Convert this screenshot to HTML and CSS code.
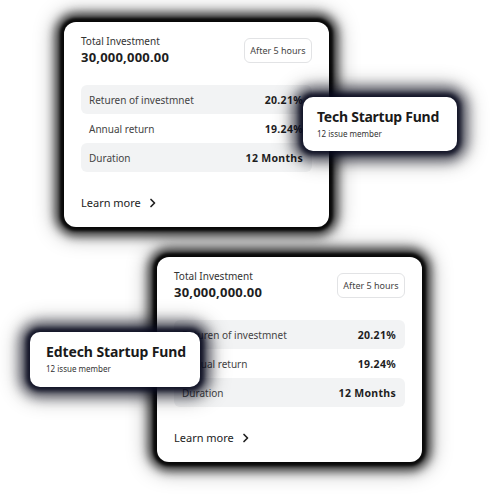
FILE: index.html
```html
<!DOCTYPE html>
<html>
<head>
<meta charset="utf-8">
<link rel="stylesheet" href="styles.css">
</head>
<body>
<div class="stage">
  <div class="card card-top">
    <div class="head">
      <div class="total">
        <div class="total-label">Total Investment</div>
        <div class="total-value">30,000,000.00</div>
      </div>
      <div class="pill">After 5 hours</div>
    </div>
    <div class="table">
      <div class="row shaded"><span class="lbl">Returen of investmnet</span><span class="val">20.21%</span></div>
      <div class="row"><span class="lbl">Annual return</span><span class="val">19.24%</span></div>
      <div class="row shaded"><span class="lbl">Duration</span><span class="val">12 Months</span></div>
    </div>
    <div class="more">Learn more
      <svg class="chev" width="8" height="10" viewBox="0 0 8 10"><path d="M2 1.5 L5.5 5 L2 8.5" fill="none" stroke="#222" stroke-width="1.7" stroke-linecap="round" stroke-linejoin="round"/></svg>
    </div>
    <div class="tag tag-tech">
      <div class="tag-title">Tech Startup Fund</div>
      <div class="tag-sub">12 issue member</div>
    </div>
  </div>

  <div class="card card-bottom">
    <div class="head">
      <div class="total">
        <div class="total-label">Total Investment</div>
        <div class="total-value">30,000,000.00</div>
      </div>
      <div class="pill">After 5 hours</div>
    </div>
    <div class="table">
      <div class="row shaded"><span class="lbl">Returen of investmnet</span><span class="val">20.21%</span></div>
      <div class="row"><span class="lbl">Annual return</span><span class="val">19.24%</span></div>
      <div class="row shaded"><span class="lbl">Duration</span><span class="val">12 Months</span></div>
    </div>
    <div class="more">Learn more
      <svg class="chev" width="8" height="10" viewBox="0 0 8 10"><path d="M2 1.5 L5.5 5 L2 8.5" fill="none" stroke="#222" stroke-width="1.7" stroke-linecap="round" stroke-linejoin="round"/></svg>
    </div>
    <div class="tag tag-ed">
      <div class="tag-title">Edtech Startup Fund</div>
      <div class="tag-sub">12 issue member</div>
    </div>
  </div>
</div>
</body>
</html>
```

FILE: styles.css
```css
html, body {
  margin: 0;
  padding: 0;
  background: #ffffff;
}
body {
  width: 500px;
  height: 496px;
  overflow: hidden;
  font-family: "Noto Sans", "Open Sans", sans-serif;
  color: #222;
}
.stage {
  display: flex;
  flex-direction: column;
  padding-top: 22px;
  gap: 30px;
}
.card {
  position: relative;
  box-sizing: border-box;
  width: 265px;
  height: 205px;
  background: #fff;
  border-radius: 12px;
  padding: 16px 17px 0 17px;
  box-shadow: 0 0 3px 4px rgba(0,0,0,0.85), 0 0 10px 9px rgba(0,0,0,0.7), 0 0 20px 10px rgba(0,0,0,0.35);
}
.card-top { margin-left: 64px; }
.card-bottom { margin-left: 157px; }
.head {
  display: flex;
  justify-content: space-between;
  align-items: flex-start;
}
.total { margin-top: -4px; }
.total-label {
  font-size: 10px;
  line-height: 14px;
  color: #333;
}
.total-value {
  font-size: 13px;
  font-weight: 700;
  line-height: 18px;
  color: #1e1e1e;
  letter-spacing: 0.2px;
}
.pill {
  box-sizing: border-box;
  width: 68px;
  height: 25px;
  border: 1px solid #e2e3e5;
  border-radius: 6px;
  font-size: 9px;
  color: #444;
  display: flex;
  align-items: center;
  justify-content: center;
}
.table {
  margin-top: 19px;
  display: flex;
  flex-direction: column;
}
.row {
  height: 29px;
  display: flex;
  align-items: center;
  justify-content: space-between;
  padding: 0 9px 0 8px;
  border-radius: 6px;
}
.row.shaded { background: #f2f3f4; }
.lbl {
  font-size: 10px;
  color: #444;
}
.val {
  font-size: 10.5px;
  font-weight: 700;
  color: #1e1e1e;
  letter-spacing: 0.3px;
}
.more {
  margin-top: 23px;
  font-size: 11px;
  line-height: 16px;
  color: #222;
  display: flex;
  align-items: center;
  gap: 8px;
}
.chev { display: block; }
.tag {
  position: absolute;
  top: 75px;
  box-sizing: border-box;
  height: 54px;
  background: #fff;
  border-radius: 10px;
  padding: 10px 14px 0 14px;
  z-index: 2;
  white-space: nowrap;
  box-shadow: 0 0 4px 4px rgba(8,10,30,0.85), 0 0 12px 10px rgba(8,10,30,0.6), 0 0 20px 12px rgba(0,0,0,0.3);
}
.tag-tech { left: 239px; width: 154px; }
.tag-ed { left: -127px; width: 170px; height: 55px; padding-left: 16px; }
.tag-title {
  font-size: 14px;
  font-weight: 700;
  line-height: 20px;
  color: #1a1a1a;
  letter-spacing: -0.25px;
}
.tag-ed .tag-title { letter-spacing: -0.1px; }
.tag-sub {
  font-size: 8px;
  line-height: 12px;
  color: #333;
  margin-top: 1px;
}
```
